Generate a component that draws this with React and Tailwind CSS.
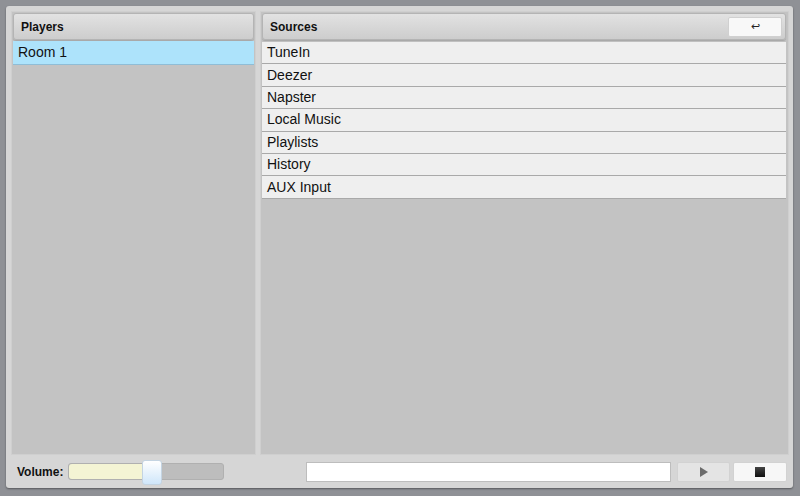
import React from 'react';

const sources = ['TuneIn', 'Deezer', 'Napster', 'Local Music', 'Playlists', 'History', 'AUX Input'];

const PanelHeader = ({ title, children }) => (
  <div className="h-[27px] flex items-center justify-between pl-[7px] pr-[3px] rounded-[3px] border border-[#b4b4b4] bg-gradient-to-b from-[#e2e2e2] to-[#cdcdcd] shadow-[0_1px_1px_rgba(0,0,0,0.15)]">
    <span className="text-[12px] font-bold text-[#111]">{title}</span>
    {children}
  </div>
);

const App = () => {
  return (
    <div
      className="w-[800px] h-[496px] bg-[#8f9196] pt-[6px] pl-[6px] pr-[7px] pb-[8px]"
      style={{ fontFamily: '"Liberation Sans", Arial, sans-serif' }}
    >
      <div className="w-full h-full bg-[#d6d6d6] rounded-[3px] pt-[5px] pl-[5px] pr-[4px] flex flex-col shadow-[0_1px_2px_rgba(0,0,0,0.4)]">
        <div className="h-[444px] flex gap-[4px]">
          {/* Players */}
          <div className="w-[245px] bg-[#c3c3c3] border border-[#cfcfcf] p-[1px] flex flex-col">
            <PanelHeader title="Players" />
            <div className="mt-[1px] h-[24px] bg-[#ade3fb] border-b border-[#8fbdd6] flex items-center pl-[5px] text-[14px] text-[#111]">
              Room 1
            </div>
          </div>
          {/* Sources */}
          <div className="flex-1 bg-[#c3c3c3] border border-[#cfcfcf] pt-[1px] pl-[1px] pr-[2px] flex flex-col">
            <PanelHeader title="Sources">
              <button className="w-[54px] h-[20px] bg-[#f8f8f8] rounded-[2px] border border-[#d0d0d0] flex items-center justify-center text-[11px] text-[#222]">
                ↩
              </button>
            </PanelHeader>
            <div className="mt-[2px] flex flex-col">
              {sources.map((s) => (
                <div
                  key={s}
                  className="h-[22.4px] bg-[#efefef] border-b border-[#a9a9a9] flex items-center pl-[5px] text-[14px] text-[#111]"
                >
                  {s}
                </div>
              ))}
            </div>
          </div>
        </div>
        {/* Bottom bar */}
        <div className="flex-1 flex items-center pl-[6px] pr-[2px]">
          <span className="text-[12px] font-bold text-[#111] w-[51px]">Volume:</span>
          <div className="relative w-[157px] h-[17px] rounded-[3px] border border-[#b0b0b0] bg-[#bdbdbd]">
            <div className="h-full w-[76px] bg-[#f4f4d4] rounded-l-[3px]" />
            <div className="absolute left-[73px] top-[-4px] w-[20px] h-[25px] rounded-[3px] border border-[#c4d4e2] bg-gradient-to-b from-[#ffffff] to-[#cfe6fa]" />
          </div>
          <div className="ml-[82px] w-[367px] h-[20px] bg-white border border-[#bdbdbd]" />
          <button className="ml-[6px] w-[53px] h-[20px] bg-[#e4e4e4] rounded-[2px] border border-[#d2d2d2] flex items-center justify-center">
            <svg width="8" height="10" viewBox="0 0 8 10"><path d="M0 0 L8 5 L0 10 Z" fill="#6b6b6b" /></svg>
          </button>
          <button className="ml-[3px] w-[54px] h-[20px] bg-[#f7f7f7] rounded-[2px] border border-[#d2d2d2] flex items-center justify-center">
            <div className="w-[10px] h-[10px] bg-gradient-to-b from-[#444] to-[#111]" />
          </button>
        </div>
      </div>
    </div>
  );
};

export default App;
